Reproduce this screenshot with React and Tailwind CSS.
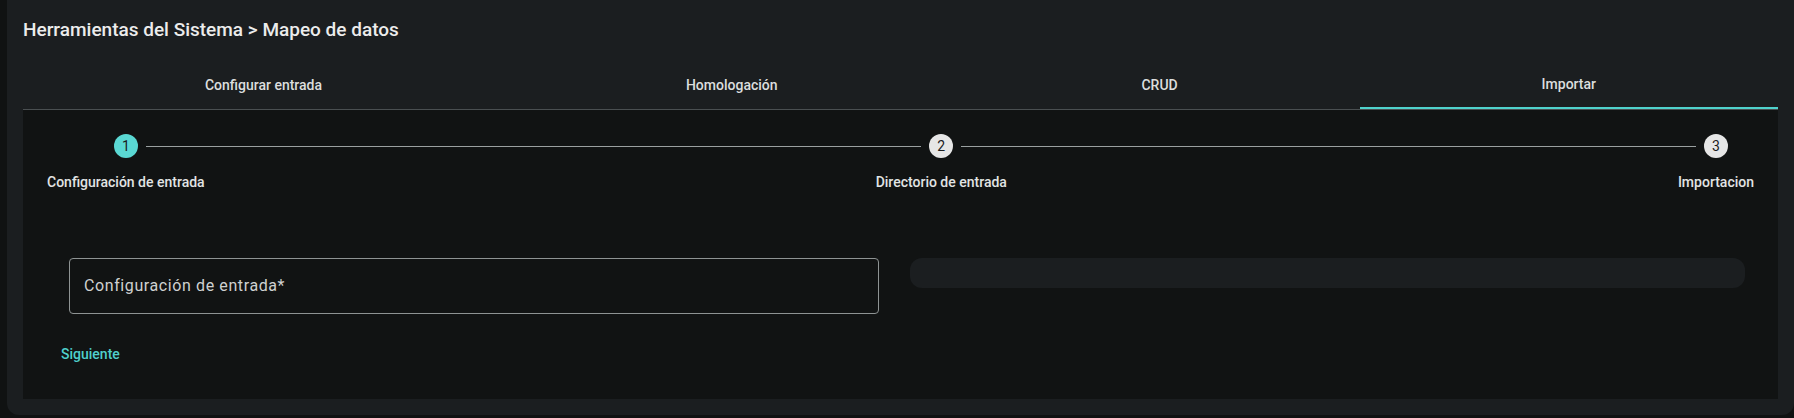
import React from 'react';

const tabs = ['Configurar entrada', 'Homologación', 'CRUD', 'Importar'];
const steps = ['Configuración de entrada', 'Directorio de entrada', 'Importacion'];

function Step({ n, label, active, first, last }) {
    return (
        <div className="flex flex-col items-center">
            <div className="flex items-center w-full h-6">
                <div className={`flex-1 h-px ${first ? '' : 'bg-[#9aa0a0]'}`} />
                <div
                    className={`mx-2 w-6 h-6 rounded-full flex items-center justify-center text-[14px] leading-none text-[#1a1c1d] ${
                        active ? 'bg-[#5ad8d3]' : 'bg-[#e6e6e6]'
                    }`}
                >
                    {n}
                </div>
                <div className={`flex-1 h-px ${last ? '' : 'bg-[#9aa0a0]'}`} />
            </div>
            <div className="mt-[14px] text-[14px] leading-5 font-medium text-[#e2e4e4] whitespace-nowrap">{label}</div>
        </div>
    );
}

export default function App() {
    return (
        <div className="w-[1794px] h-[418px] bg-[#101212] pl-[7px] pb-[3px] flex font-['Roboto',sans-serif]">
            <div className="flex-1 bg-[#1b1e20] rounded-b-xl px-4 pb-4 flex flex-col">
                {/* header */}
                <h1 className="pt-4 text-[19px] leading-7 font-medium text-[#ececec]">
                    Herramientas del Sistema &gt; Mapeo de datos
                </h1>

                {/* tabs */}
                <div className="mt-[17px] flex border-b border-[#4a4f51]">
                    {tabs.map((t) => (
                        <div
                            key={t}
                            className={`flex-auto h-12 flex items-center justify-center text-[14px] font-medium text-[#dcdede] ${
                                t === 'Importar' ? 'border-b-2 border-[#4fd2cc] -mb-px' : ''
                            }`}
                        >
                            {t}
                        </div>
                    ))}
                </div>

                {/* panel */}
                <div className="flex-1 bg-[#111313] px-6 pt-6">
                    <div className="flex items-start">
                        {steps.map((s, i) => (
                            <React.Fragment key={s}>
                                <Step n={i + 1} label={s} active={i === 0} first={i === 0} last={i === steps.length - 1} />
                                {i < steps.length - 1 && (
                                    <div className="flex-1 h-6 flex items-center">
                                        <div className="w-full h-px bg-[#9aa0a0]" />
                                    </div>
                                )}
                            </React.Fragment>
                        ))}
                    </div>

                    <div className="mt-[66px] grid grid-cols-2">
                        <div className="mx-[22px] h-[56px] border border-[#8e9393] rounded-[4px] flex items-center px-[14px]">
                            <span className="text-[16px] tracking-[0.6px] text-[#cfd1d1]">Configuración de entrada*</span>
                        </div>
                        <div className="mx-[9px] h-[30px] rounded-xl bg-[#1b1e20]" />
                    </div>

                    <div className="mt-[30px] pl-[14px] text-[14px] leading-5 font-medium text-[#4fd0cc]">Siguiente</div>
                </div>
            </div>
        </div>
    );
}
